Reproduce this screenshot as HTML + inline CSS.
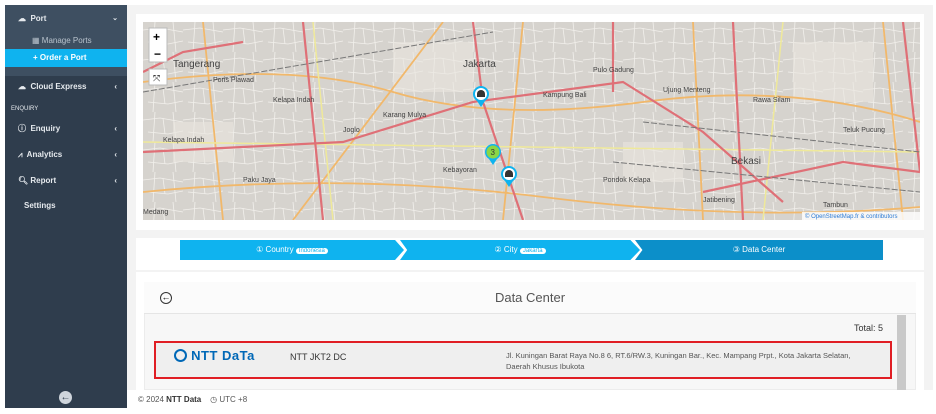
<!DOCTYPE html>
<html><head><meta charset="utf-8"><style>
*{box-sizing:border-box;margin:0;padding:0}
body{width:936px;height:414px;background:#fff;font-family:"Liberation Sans",sans-serif;position:relative;overflow:hidden}
.sb{position:absolute;left:5px;top:5px;width:122px;height:403px;background:#2f3d4d;color:#e6eaee;font-size:8px;font-weight:bold}
.sbtop{background:#3e4f61;height:71px}
.it{position:absolute;left:0;width:122px;height:18px;line-height:18px}
.main{position:absolute;left:127px;top:5px;width:806px;height:385px;background:#f3f3f3}
.foot{position:absolute;left:127px;top:390px;width:806px;height:20px;font-size:8px;color:#555;line-height:20px;padding-left:11px}
</style></head><body>
<div class="sb">
 <div class="sbtop"></div>
 <div class="it" style="top:5px;padding-left:13px">☁&nbsp; Port<span style="position:absolute;right:9px;font-size:7px">⌄</span></div>
 <div class="it" style="top:27px;padding-left:27px;color:#b9c3cd;font-weight:normal">▦ Manage Ports</div>
 <div class="it" style="top:44px;background:#0fb3ef;color:#fff;padding-left:28px">+ Order a Port</div>
 <div class="it" style="top:73px;padding-left:13px">☁&nbsp; Cloud Express<span style="position:absolute;right:10px">‹</span></div>
 <div class="it" style="top:95px;padding-left:6px;font-size:6px;font-weight:normal">ENQUIRY</div>
 <div class="it" style="top:115px;padding-left:13px">ⓘ&nbsp; Enquiry<span style="position:absolute;right:10px">‹</span></div>
 <div class="it" style="top:141px;padding-left:13px">⩘&nbsp; Analytics<span style="position:absolute;right:10px">‹</span></div>
 <div class="it" style="top:167px;padding-left:13px">🔍︎ Report<span style="position:absolute;right:10px">‹</span></div>
 <div class="it" style="top:192px;padding-left:19px">Settings</div>
 <div style="position:absolute;left:54px;top:386px;width:13px;height:13px;border-radius:50%;background:#cfd5dc;color:#2f3d4d;font-size:10px;text-align:center;line-height:13px">←</div>
</div>
<div class="main">
 <div style="position:absolute;left:9px;top:9px;width:788px;height:216px;background:#fff"></div>
 <svg style="position:absolute;left:16px;top:17px" width="777" height="198" viewBox="0 0 777 198">
  <defs><pattern id="st" width="40" height="30" patternUnits="userSpaceOnUse">
   <path d="M0 8 L17 6 L40 10 M5 20 L25 22 L40 19 M12 0 L10 30 M30 0 L33 30 M20 6 L22 22" stroke="#f2f0ec" stroke-width=".8" fill="none"/></pattern></defs>
  <rect width="777" height="198" fill="#d6d3ce"/>
  <rect width="777" height="198" fill="url(#st)"/>
  <g fill="#e9e6df" opacity=".6"><rect x="30" y="100" width="60" height="40"/><rect x="250" y="20" width="80" height="50"/><rect x="480" y="120" width="60" height="40"/><rect x="650" y="20" width="80" height="60"/></g>
  <g fill="none" stroke="#f1b86b" stroke-width="1.8">
   <path d="M0 60 Q150 40 250 70 T500 80 T777 100"/><path d="M0 170 Q200 150 400 175 T777 185"/><path d="M60 0 L80 198"/><path d="M380 0 L360 198"/><path d="M550 0 L560 198"/><path d="M740 0 L760 198"/><path d="M150 198 L300 0"/>
  </g>
  <g fill="none" stroke="#efe99a" stroke-width="1.5"><path d="M0 120 L777 130"/><path d="M170 0 L190 198"/><path d="M640 0 L620 198"/></g>
  <g fill="none" stroke="#df7077" stroke-width="2.2">
   <path d="M0 130 L200 120 L330 80 L480 60 L560 110 L640 180"/><path d="M160 0 L180 198"/><path d="M330 0 L340 80 L380 198"/><path d="M470 0 L470 70"/><path d="M590 0 L600 198"/><path d="M760 0 L777 150"/><path d="M0 50 L40 30 L100 20"/><path d="M560 170 L700 140 L777 150"/>
  </g>
  <g fill="none" stroke="#777" stroke-width="1" stroke-dasharray="6 2"><path d="M0 70 L350 10"/><path d="M470 140 L777 170"/><path d="M500 100 L777 130"/></g>
  <g font-size="7" fill="#444" font-family="Liberation Sans">
   <text x="30" y="45" font-size="10">Tangerang</text><text x="320" y="45" font-size="10">Jakarta</text><text x="588" y="142" font-size="10">Bekasi</text>
   <text x="70" y="60">Poris Plawad</text><text x="130" y="80">Kelapa Indah</text><text x="240" y="95">Karang Mulya</text><text x="200" y="110">Joglo</text><text x="400" y="75">Kampung Bali</text><text x="450" y="50">Pulo Gadung</text><text x="520" y="70">Ujung Menteng</text><text x="610" y="80">Rawa Silam</text><text x="700" y="110">Teluk Pucung</text><text x="100" y="160">Paku Jaya</text><text x="300" y="150">Kebayoran</text><text x="460" y="160">Pondok Kelapa</text><text x="560" y="180">Jatibening</text><text x="680" y="185">Tambun</text><text x="0" y="192">Medang</text><text x="20" y="120">Kelapa Indah</text>
  </g>
  <rect x="659" y="190" width="118" height="8" fill="#fff" opacity=".8"/>
  <text x="662" y="196" font-size="6" fill="#2a7ad5" font-family="Liberation Sans">© OpenStreetMap.fr &amp; contributors</text>
  <g><rect x="6" y="6" width="18" height="34" fill="#fff" stroke="#bbb"/><text x="10" y="19" font-size="12" font-weight="bold">+</text><text x="11" y="36" font-size="12" font-weight="bold">−</text>
  <rect x="6" y="47" width="18" height="16" fill="#fff" stroke="#bbb"/><text x="10" y="59" font-size="9">⤧</text></g>
  <g transform="translate(338,72)"><polygon points="-6,4 6,4 0,13" fill="#0fb3ef"/><circle r="8" fill="#0fb3ef"/><circle r="6" fill="#fff"/><path d="M-4 3 L-4 0 A4 4 0 0 1 4 0 L4 3z" fill="#333"/></g>
  <g transform="translate(366,152)"><polygon points="-6,4 6,4 0,13" fill="#0fb3ef"/><circle r="8" fill="#0fb3ef"/><circle r="6" fill="#fff"/><path d="M-4 3 L-4 0 A4 4 0 0 1 4 0 L4 3z" fill="#333"/></g>
  <g transform="translate(350,130)"><polygon points="-6,4 6,4 0,13" fill="#0fb3ef"/><circle r="8" fill="#0fb3ef"/><circle r="6.5" fill="#8ad646"/><text x="-2.5" y="3" font-size="8" fill="#333">3</text></g>
 </svg>
 <div style="position:absolute;left:9px;top:233px;width:788px;height:32px;background:#fff"></div>
 <div style="position:absolute;left:53px;top:235px;width:703px;height:20px;font-size:8px;color:#fff;line-height:20px">
  <div style="position:absolute;left:0;width:224px;height:20px;background:#0fb3ef;text-align:center;clip-path:polygon(0 0,96% 0,100% 50%,96% 100%,0 100%)">① Country <span style="background:#fff;color:#0fb3ef;border-radius:6px;padding:0 3px;font-size:6px">Indonesia</span></div>
  <div style="position:absolute;left:220px;width:240px;height:20px;background:#0fb3ef;text-align:center;clip-path:polygon(0 0,96% 0,100% 50%,96% 100%,0 100%,3% 50%)">② City <span style="background:#fff;color:#0fb3ef;border-radius:6px;padding:0 3px;font-size:6px">Jakarta</span></div>
  <div style="position:absolute;left:455px;width:248px;height:20px;background:#0c8fc9;text-align:center;clip-path:polygon(0 0,100% 0,100% 100%,0 100%,3% 50%)">③ Data Center</div>
 </div>
 <div style="position:absolute;left:9px;top:267px;width:788px;height:118px;background:#fff"></div>
 <div style="position:absolute;left:17px;top:277px;width:772px;height:108px;background:#f7f7f7;border:1px solid #ececec"></div>
 <div style="position:absolute;left:17px;top:277px;width:772px;height:32px;background:#fbfbfb;border-bottom:1px solid #e5e5e5;text-align:center;font-size:13px;color:#555;line-height:32px">Data Center</div>
 <div style="position:absolute;left:33px;top:287px;width:12px;height:12px;border:1.5px solid #333;border-radius:50%;font-size:9px;line-height:9px;text-align:center;font-weight:bold">←</div>
 <div style="position:absolute;left:770px;top:310px;width:9px;height:75px;background:#c9c9c9"></div>
 <div style="position:absolute;left:727px;top:318px;font-size:9px;color:#333">Total: 5</div>
 <div style="position:absolute;left:27px;top:336px;width:738px;height:38px;border:2px solid #e01e24;background:#efefef"></div>
 <div style="position:absolute;left:47px;top:343px;font-size:13px;font-weight:bold;color:#0068b7;letter-spacing:.5px"><span style="display:inline-block;width:13px;height:13px;border:2.5px solid #0068b7;border-radius:50%;vertical-align:-2px"></span> NTT DaTa</div>
 <div style="position:absolute;left:163px;top:347px;font-size:9px;color:#333">NTT JKT2 DC</div>
 <div style="position:absolute;left:379px;top:345px;font-size:7.5px;color:#555;line-height:11px">Jl. Kuningan Barat Raya No.8 6, RT.6/RW.3, Kuningan Bar., Kec. Mampang Prpt., Kota Jakarta Selatan,<br>Daerah Khusus Ibukota</div>
</div>
<div class="foot">© 2024 <b style="color:#333">NTT Data</b> &nbsp;&nbsp; ◷ UTC +8</div>
</body></html>
